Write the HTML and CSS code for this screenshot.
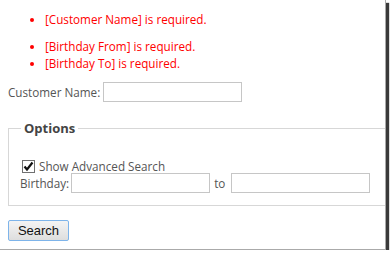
FILE: index.html
```html
<!DOCTYPE html>
<html lang="en">

<head>
    <meta charset="UTF-8">
    <title>Customer Search</title>
    <link rel="stylesheet" href="styles.css">
</head>

<body>
    <div class="window">
        <div class="validation-summary">
            <ul>
                <li>[Customer Name] is required.</li>
            </ul>
            <ul>
                <li>[Birthday From] is required.</li>
                <li>[Birthday To] is required.</li>
            </ul>
        </div>

        <div class="field-row name-row">
            <label for="customerName">Customer Name:</label>
            <input type="text" id="customerName" class="text-box">
        </div>

        <fieldset class="options">
            <legend>Options</legend>
            <label class="check-row">
                <span class="check-box">
                    <svg width="11" height="11" viewBox="0 0 11 11">
                        <path d="M1.5 5.5 L4 8.5 L9.5 1.5" fill="none" stroke="#111" stroke-width="2.2"/>
                    </svg>
                </span>
                Show Advanced Search
            </label>
            <div class="field-row">
                <label for="birthdayFrom">Birthday:</label>
                <input type="text" id="birthdayFrom" class="text-box">
                <span class="to">to</span>
                <input type="text" id="birthdayTo" class="text-box">
            </div>
        </fieldset>

        <button type="submit" class="search-btn">Search</button>
    </div>
</body>

</html>
```

FILE: styles.css
```css
body {
    margin: 0;
    padding: 0;
    background-color: #fff;
    font-family: 'Open Sans', 'Noto Sans', sans-serif;
    font-size: 11.7px;
    color: #555;
}

.window {
    width: 386px;
    height: 250px;
    box-sizing: border-box;
    padding: 0 0 0 8px;
    background-color: #fff;
    border-right: 1px solid #aaa;
    border-bottom: 1px solid #aaa;
    box-shadow: 3px 3px 1px #3a3a3a;
    overflow: hidden;
}

.validation-summary {
    color: #ff0000;
    padding-top: 11px;
}

.validation-summary ul {
    margin: 0 0 10px 0;
    padding-left: 37px;
    line-height: 17px;
}

.field-row {
    display: flex;
    align-items: center;
}

.name-row {
    margin-top: 7px;
}

.name-row .text-box {
    margin-left: 3px;
}

.text-box {
    width: 139px;
    height: 20px;
    box-sizing: border-box;
    margin: 0 0 0 2px;
    border: 1px solid #c6c6c6;
    padding: 0 3px;
}

.options {
    margin: 17px 0 0 0;
    padding: 22px 0 12px 11px;
    border: 1px solid #d7d7d7;
    border-right: none;
}

.options legend {
    padding: 0 3px;
    margin-left: 1px;
    font-weight: bold;
    font-size: 13px;
    color: #444;
}

.check-row {
    display: flex;
    align-items: center;
    line-height: 14px;
}

.check-box {
    display: flex;
    align-items: center;
    justify-content: center;
    width: 13px;
    height: 13px;
    box-sizing: border-box;
    margin: 0 4px 0 2px;
    border: 1px solid #707070;
    background-color: #fff;
}

.to {
    margin: 0 4px 0 4px;
}

.search-btn {
    display: block;
    margin-top: 14px;
    width: 61px;
    height: 21px;
    padding: 0;
    font-family: 'Liberation Sans', Arial, sans-serif;
    font-size: 13px;
    color: #111;
    background: linear-gradient(#f4f4f4, #dedede);
    border: 1px solid #7eb4ea;
    border-radius: 2px;
}
```
